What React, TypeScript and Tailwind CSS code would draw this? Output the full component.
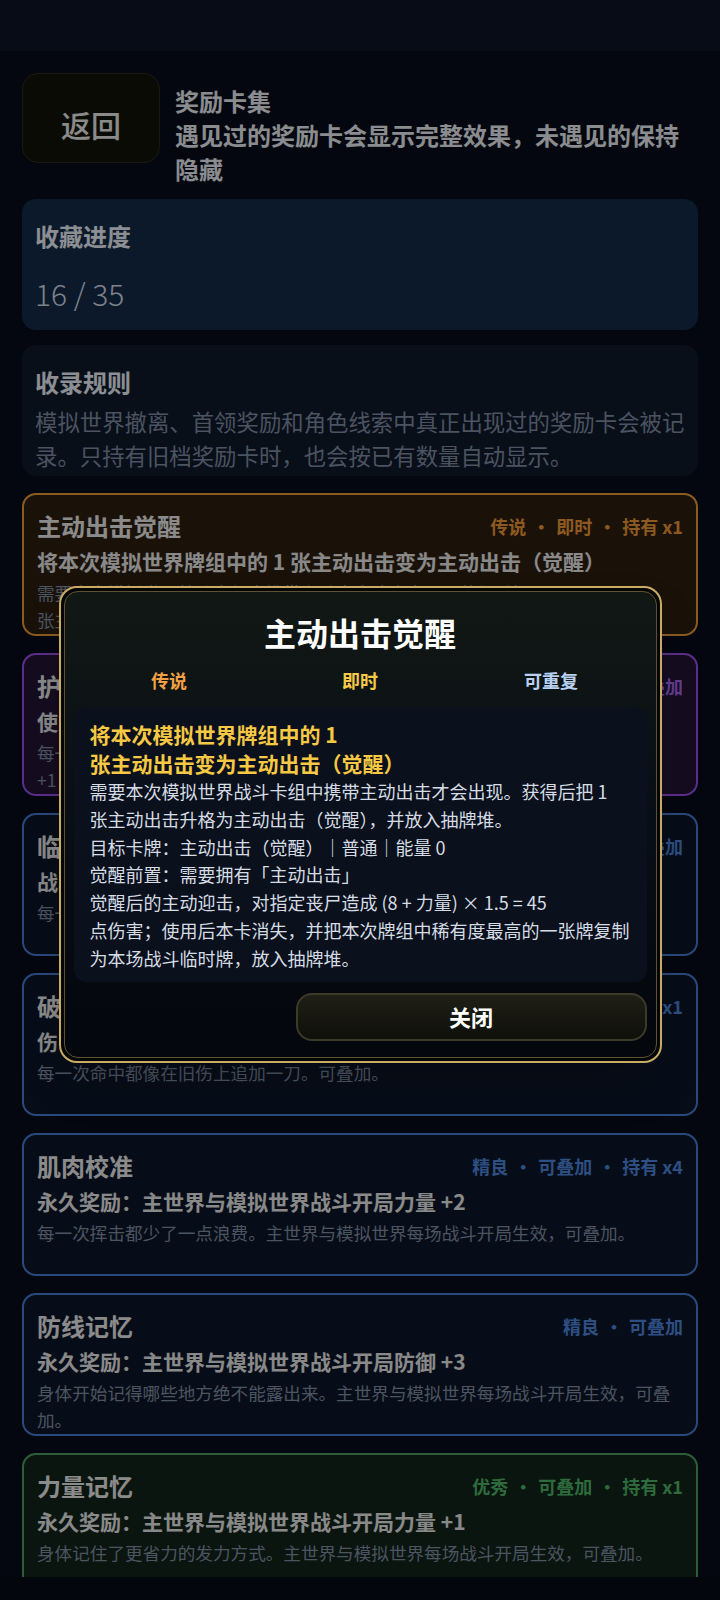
import React from "react";

type Tone = "orange" | "purple" | "blue" | "green";

const toneStyles: Record<Tone, { card: string; meta: string }> = {
  orange: { card: "border-[#e89a3a] bg-[#2c1f10]", meta: "text-[#e99636]" },
  purple: { card: "border-[#9a4fe8] bg-[#231536]", meta: "text-[#a866f0]" },
  blue: { card: "border-[#477bcf] bg-[#0c1628]", meta: "text-[#4b84d9]" },
  green: { card: "border-[#4b9d61] bg-[#112319]", meta: "text-[#4db364]" },
};

type RewardCard = {
  title: string;
  meta: string[];
  tone: Tone;
  effect: string;
  body: string[];
};

const cards: RewardCard[] = [
  {
    title: "主动出击觉醒",
    meta: ["传说", "即时", "持有 x1"],
    tone: "orange",
    effect: "将本次模拟世界牌组中的 1 张主动出击变为主动出击（觉醒）",
    body: [
      "需要本次模拟世界战斗卡组中携带主动出击才会出现。获得后把 1",
      "张主动出击升格为主动出击（觉醒），并放入抽牌堆。",
    ],
  },
  {
    title: "护盾回响",
    meta: ["史诗", "可叠加"],
    tone: "purple",
    effect: "使用防御卡时额外获得 2 点护甲",
    body: ["每一次格挡都会留下回响，主世界与模拟世界每场战斗开局护甲", "+1，可叠加。"],
  },
  {
    title: "临场反应",
    meta: ["精良", "可叠加"],
    tone: "blue",
    effect: "战斗开始时额外抽 1 张牌",
    body: ["每一场战斗都比上一场更快进入状态。可叠加。"],
  },
  {
    title: "破绽记忆",
    meta: ["精良", "可叠加", "持有 x1"],
    tone: "blue",
    effect: "伤害奖励：对受伤的丧尸额外造成 1 点伤害",
    body: ["每一次命中都像在旧伤上追加一刀。可叠加。"],
  },
  {
    title: "肌肉校准",
    meta: ["精良", "可叠加", "持有 x4"],
    tone: "blue",
    effect: "永久奖励：主世界与模拟世界战斗开局力量 +2",
    body: ["每一次挥击都少了一点浪费。主世界与模拟世界每场战斗开局生效，可叠加。"],
  },
  {
    title: "防线记忆",
    meta: ["精良", "可叠加"],
    tone: "blue",
    effect: "永久奖励：主世界与模拟世界战斗开局防御 +3",
    body: ["身体开始记得哪些地方绝不能露出来。主世界与模拟世界每场战斗开局生效，可叠加。"],
  },
  {
    title: "力量记忆",
    meta: ["优秀", "可叠加", "持有 x1"],
    tone: "green",
    effect: "永久奖励：主世界与模拟世界战斗开局力量 +1",
    body: ["身体记住了更省力的发力方式。主世界与模拟世界每场战斗开局生效，可叠加。"],
  },
];

function Lines({ lines }: { lines: string[] }) {
  return (
    <>
      {lines.map((l, i) => (
        <React.Fragment key={i}>
          {i > 0 && <br />}
          {l}
        </React.Fragment>
      ))}
    </>
  );
}

function CardItem({ card }: { card: RewardCard }) {
  const tone = toneStyles[card.tone];
  return (
    <div className={`min-h-[143px] rounded-[14px] border-2 px-[13px] pt-[14px] pb-[1px] ${tone.card}`}>
      <div className="flex items-center justify-between">
        <h3 className="text-[24px] leading-[34px] font-bold text-[#e8e8e8]">{card.title}</h3>
        <div className={`flex items-center text-[18px] font-bold ${tone.meta}`}>
          {card.meta.map((m, i) => (
            <React.Fragment key={i}>
              {i > 0 && <span className="inline-block w-[30px] text-center">·</span>}
              <span>{m}</span>
            </React.Fragment>
          ))}
        </div>
      </div>
      <p className="text-[21px] leading-[36px] font-bold text-[#e4e4e4]">{card.effect}</p>
      <p className="text-[17.6px] leading-[27px] text-[#7f8ca2]">
        <Lines lines={card.body} />
      </p>
    </div>
  );
}

function DetailModal() {
  return (
    <div className="w-[603px] rounded-[18px] border-2 border-[#c9ab63] bg-[#030507] p-[3px] shadow-2xl">
      <div className="rounded-[14px] border border-[#5f5233] bg-gradient-to-b from-[#111814] via-[#080e15] to-[#04070c] px-[9px] pt-[18px] pb-[16px]">
        <h2 className="text-center text-[32px] leading-[44px] font-bold text-white">主动出击觉醒</h2>
        <div className="mt-[13px] grid grid-cols-3 text-center text-[18px] leading-[26px] font-bold">
          <span className="text-[#f2a044]">传说</span>
          <span className="text-[#f7c948]">即时</span>
          <span className="text-[#b8d1f0]">可重复</span>
        </div>
        <div className="mt-[14px] whitespace-nowrap rounded-[12px] bg-[#0a111d] pl-[16px] pr-[6px] pt-[13px] pb-[9px]">
          <p className="text-[21px] leading-[29px] font-bold text-[#f6c844]">
            将本次模拟世界牌组中的 1
            <br />
            张主动出击变为主动出击（觉醒）
          </p>
          <p className="text-[18px] leading-[27.8px] text-[#d6dce4]">
            <Lines
              lines={[
                "需要本次模拟世界战斗卡组中携带主动出击才会出现。获得后把 1",
                "张主动出击升格为主动出击（觉醒），并放入抽牌堆。",
                "目标卡牌：主动出击（觉醒）｜普通｜能量 0",
                "觉醒前置：需要拥有「主动出击」",
                "觉醒后的主动迎击，对指定丧尸造成 (8 + 力量) × 1.5 = 45",
                "点伤害；使用后本卡消失，并把本次牌组中稀有度最高的一张牌复制",
                "为本场战斗临时牌，放入抽牌堆。",
              ]}
            />
          </p>
        </div>
        <div className="mt-[11px] flex justify-end">
          <button className="h-[48px] w-[351px] rounded-[16px] border-2 border-[#3c3a29] bg-gradient-to-b from-[#1f1f16] to-[#0f100a] text-[22px] font-bold text-white">
            关闭
          </button>
        </div>
      </div>
    </div>
  );
}

export default function App() {
  return (
    <div className="relative h-[1600px] w-full overflow-hidden bg-[#070d19] font-['Noto_Sans_CJK_SC','Noto_Sans',sans-serif]">
      <div className="h-[51px] bg-[#0c1427]" />
      <div className="h-[1526px] overflow-hidden px-[22px] pt-[22px]">
        <header className="flex items-start gap-[15px]">
          <button className="h-[90px] w-[138px] shrink-0 rounded-[16px] border border-[#2b2b1d] bg-[#131309] pt-[12px] text-[30px] font-medium text-[#e6e6e6]">
            返回
          </button>
          <div className="pt-[11px] font-bold text-[#e6e9ee]">
            <h1 className="text-[24px] leading-[34px]">奖励卡集</h1>
            <p className="text-[24px] leading-[34px]">遇见过的奖励卡会显示完整效果，未遇见的保持隐藏</p>
          </div>
        </header>

        <section className="mt-[13px] rounded-[14px] bg-[#132a47] px-[13px] pt-[20px] pb-[17px]">
          <h2 className="text-[24px] leading-[34px] font-bold text-[#e8edf3]">收藏进度</h2>
          <div className="mt-[20px] text-[30px] leading-[40px] font-light text-[#cfd9e6]">16 / 35</div>
        </section>

        <section className="mt-[15px] rounded-[14px] bg-[#10192b] px-[13px] pt-[20px] pb-[4px]">
          <h2 className="text-[24px] leading-[34px] font-bold text-[#e8edf3]">收录规则</h2>
          <p className="mt-[5px] text-[22.4px] leading-[34px] text-[#7d8aa0]">
            模拟世界撤离、首领奖励和角色线索中真正出现过的奖励卡会被记录。只持有旧档奖励卡时，也会按已有数量自动显示。
          </p>
        </section>

        <div className="mt-[17px] flex flex-col gap-[17px]">
          {cards.map((c, i) => (
            <CardItem key={i} card={c} />
          ))}
        </div>
      </div>
      <div className="h-[23px] bg-[#060b15]" />

      <div className="absolute inset-0 bg-black/40" />
      <div className="absolute inset-0 flex items-start justify-center pt-[586px]">
        <DetailModal />
      </div>
    </div>
  );
}
